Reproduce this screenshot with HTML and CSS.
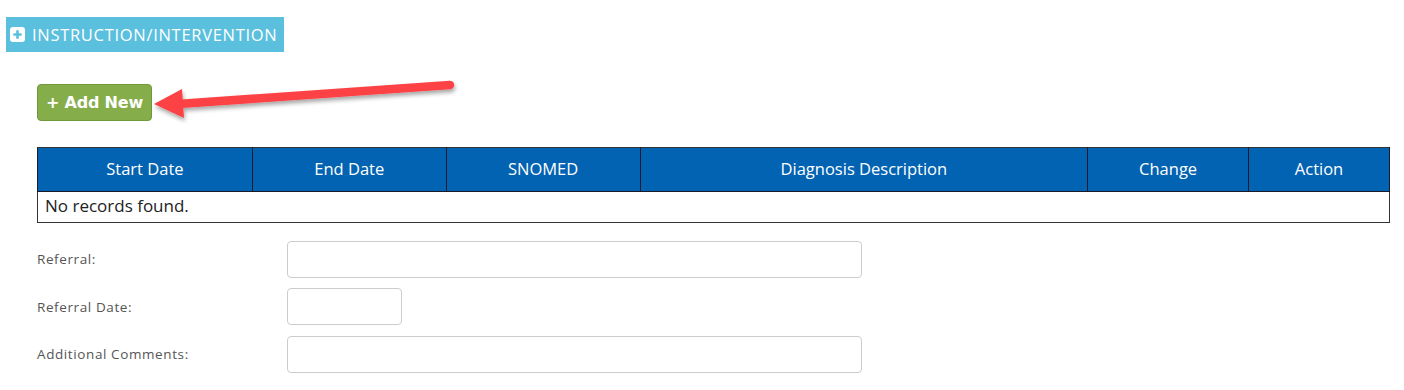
FILE: index.html
```html
<!DOCTYPE html>
<html lang="en">
<head>
    <meta charset="UTF-8">
    <title>Instruction / Intervention</title>
    <link rel="stylesheet" href="styles.css">
</head>
<body>
<div class="section">
    <div class="section_head">
        <svg class="plus_box" viewBox="0 0 15 15">
            <rect x="0" y="0" width="15" height="15" rx="3" fill="#fff"></rect>
            <path d="M7.5,3.3v8.4M3.3,7.5h8.4" stroke="#5bc0de" stroke-width="2.6"></path>
        </svg>
        <span>INSTRUCTION/INTERVENTION</span>
    </div>

    <div class="section_body">
        <div class="toolbar">
            <button class="add_btn">+ Add New</button>
            <svg class="arrow" viewBox="0 0 310 55">
                <defs>
                    <filter id="shade" x="-10%" y="-50%" width="120%" height="200%">
                        <feDropShadow dx="1" dy="3" stdDeviation="2" flood-color="#000" flood-opacity="0.35"></feDropShadow>
                    </filter>
                </defs>
                <g filter="url(#shade)">
                    <path d="M28,30 L300,11" stroke="#fd4245" stroke-width="8.5" stroke-linecap="round"></path>
                    <path d="M4,30 L32,15 L34,44 Z" fill="#fd4245"></path>
                </g>
            </svg>
        </div>

        <table class="grid">
            <thead>
            <tr>
                <th class="c1">Start Date</th>
                <th class="c2">End Date</th>
                <th class="c3">SNOMED</th>
                <th class="c4">Diagnosis Description</th>
                <th class="c5">Change</th>
                <th class="c6">Action</th>
            </tr>
            </thead>
            <tbody>
            <tr>
                <td colspan="6">No records found.</td>
            </tr>
            </tbody>
        </table>

        <div class="form">
            <div class="row">
                <label>Referral:</label>
                <input class="field wide" type="text">
            </div>
            <div class="row">
                <label>Referral Date:</label>
                <input class="field short" type="text">
            </div>
            <div class="row">
                <label>Additional Comments:</label>
                <input class="field wide" type="text">
            </div>
        </div>
    </div>
</div>
</body>
</html>
```

FILE: styles.css
```css
body{
    margin: 0;
    background: #fff;
    font-family: "Open Sans", "DejaVu Sans", sans-serif;
    color: #333;
}
.section{
    padding: 17px 0 0 6px;
}
.section_head{
    display: inline-flex;
    align-items: center;
    gap: 7px;
    height: 35px;
    width: 278px;
    box-sizing: border-box;
    padding-left: 4px;
    background-color: #5bc0de;
    color: #fff;
    font-size: 16.5px;
    letter-spacing: 0.7px;
    white-space: nowrap;
}
.plus_box{
    width: 15px;
    height: 15px;
    flex: none;
}
.section_body{
    padding: 32px 0 0 31px;
}
.toolbar{
    position: relative;
    height: 37px;
}
.add_btn{
    all: unset;
    box-sizing: border-box;
    height: 37px;
    width: 115px;
    text-align: center;
    background-color: #85ae4b;
    border: 1px solid #6f9a38;
    border-radius: 4px;
    color: #fff;
    font-family: "DejaVu Sans", Verdana, sans-serif;
    font-weight: bold;
    font-size: 16px;
    letter-spacing: -0.2px;
    line-height: 35px;
}
.arrow{
    position: absolute;
    left: 113px;
    top: -10px;
    width: 310px;
    height: 55px;
}
.grid{
    margin-top: 26px;
    width: 1353px;
    border-collapse: collapse;
    border: 1px solid #333;
    font-size: 16.5px;
    line-height: 20px;
}
.grid th{
    height: 44px;
    box-sizing: border-box;
    padding: 0 0 1px;
    background-color: #0263b2;
    color: #fff;
    font-weight: normal;
    border: 1px solid #1a1a2a;
    border-top-color: #333;
    text-align: center;
}
.grid .c1{ width: 215px; }
.grid .c2{ width: 194px; }
.grid .c3{ width: 194px; }
.grid .c4{ width: 448px; }
.grid .c5{ width: 161px; }
.grid .c6{ width: 141px; }
.grid td{
    height: 31px;
    box-sizing: border-box;
    padding: 0 0 2px 7px;
    color: #222;
    font-size: 17px;
}
.form{
    padding-top: 18px;
}
.row{
    display: flex;
    align-items: center;
    height: 36px;
    margin-bottom: 11.5px;
}
.row label{
    width: 250px;
    font-size: 13.5px;
    color: #555;
    letter-spacing: 0.6px;
}
.field{
    box-sizing: border-box;
    height: 37px;
    border: 1px solid #ccc;
    border-radius: 4px;
    background: #fff;
    margin: 0;
}
.wide{ width: 575px; }
.short{ width: 115px; }
```
